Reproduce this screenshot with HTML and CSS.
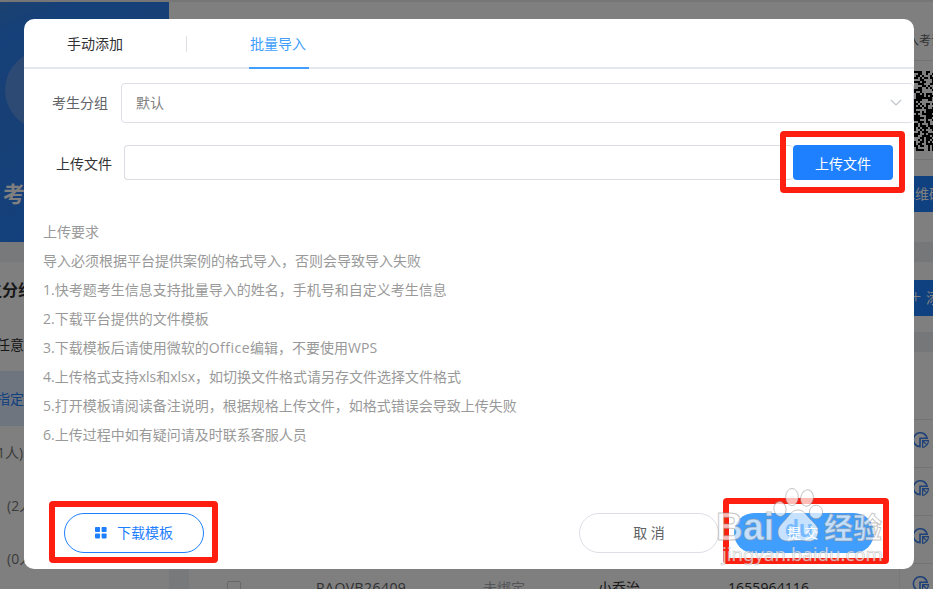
FILE: index.html
```
<!DOCTYPE html>
<html lang="zh-CN">
<head>
  <meta charset="UTF-8">
  <meta name="viewport" content="width=device-width, initial-scale=1.0">
  <title>批量导入</title>
  <link rel="stylesheet" href="styles.css">
</head>
<body>
  <svg class="symbols" width="0" height="0">
    <symbol id="pie" viewBox="0 0 18 18">
      <path d="M8 15.7A7 7 0 1 1 15.2 7.2H8Z" fill="none" stroke="currentColor" stroke-width="1.6"/>
      <path d="M10.6 9.6H16.4Q16.4 14 11.9 16.2H10.6Z M11 10l3.2 3.4" fill="none" stroke="currentColor" stroke-width="1.2"/>
    </symbol>
  </svg>

  <div class="page">
    <div class="left">
      <div class="banner">
        <div class="circle"></div>
        <h2>考试</h2>
      </div>
      <div class="groups">
        <div class="group-title">生分组</div>
        <div class="group">任意</div>
        <div class="group active">指定</div>
        <div class="group count first">1人)</div>
        <div class="group count">(2人)</div>
        <div class="group count">(0人)</div>
      </div>
    </div>
    <div class="main">
      <div class="table-row">
        <span class="checkbox"></span>
        <span class="code">RAQVB26409</span>
        <span class="unbound">未绑定</span>
        <span class="name">小乔治</span>
        <span class="phone">1655964116</span>
      </div>
    </div>
    <div class="right">
      <div class="entry">入考试</div>
      <div class="qr"><svg id="qr" width="80" height="80" shape-rendering="crispEdges"></svg></div>
      <div class="side-button qr-button">二维码</div>
      <div class="band"></div>
      <div class="add"><div class="side-button"><span class="plus">+</span>添加</div></div>
      <div class="band"></div>
      <div class="head"></div>
      <div class="op"><svg><use href="#pie"/></svg></div>
      <div class="op"><svg><use href="#pie"/></svg></div>
      <div class="op"><svg><use href="#pie"/></svg></div>
      <div class="op"><svg><use href="#pie"/></svg></div>
    </div>
  </div>

  <div class="mask">
    <div class="dialog">
      <div class="tabs">
        <div class="tab">手动添加</div>
        <span class="split"></span>
        <div class="tab active">批量导入</div>
      </div>
      <div class="form-row">
        <label>考生分组</label>
        <div class="select">
          <span>默认</span>
          <svg width="12" height="8" viewBox="0 0 12 8"><path d="M1 1l5 5 5-5" fill="none" stroke="#c0c4cc" stroke-width="1.2"/></svg>
        </div>
      </div>
      <div class="form-row upload">
        <label>上传文件</label>
        <div class="file-input"></div>
        <button class="upload-button">上传文件</button>
      </div>
      <div class="tips">
        <p>上传要求</p>
        <p>导入必须根据平台提供案例的格式导入，否则会导致导入失败</p>
        <p>1.快考题考生信息支持批量导入的姓名，手机号和自定义考生信息</p>
        <p>2.下载平台提供的文件模板</p>
        <p>3.下载模板后请使用微软的<span class="office">Office</span>编辑，不要使用WPS</p>
        <p>4.上传格式支持xls和xlsx，如切换文件格式请另存文件选择文件格式</p>
        <p>5.打开模板请阅读备注说明，根据规格上传文件，如格式错误会导致上传失败</p>
        <p>6.上传过程中如有疑问请及时联系客服人员</p>
      </div>
      <div class="footer">
        <button class="round download">
          <svg width="12" height="12" viewBox="0 0 12 12" fill="currentColor"><rect width="5" height="5" rx=".8"/><rect x="6.6" width="5" height="5" rx=".8"/><rect y="6.4" width="5" height="5" rx=".8"/><rect x="6.6" y="6.4" width="5" height="5" rx=".8"/></svg>
          下载模板
        </button>
        <button class="round cancel">取 消</button>
        <button class="round submit" aria-label="提交"></button>
      </div>
    </div>
  </div>

  <div class="frame frame-upload"></div>
  <div class="frame frame-download"></div>
  <div class="frame frame-submit"></div>

  <svg class="watermark" width="180" height="90" viewBox="0 0 180 90">
    <g class="mark">
      <ellipse cx="63" cy="29" rx="6" ry="7.5" transform="rotate(-12 63 29)"/>
      <ellipse cx="75" cy="17" rx="6.3" ry="8.6"/>
      <ellipse cx="90" cy="18" rx="6.3" ry="8.2" transform="rotate(12 90 18)"/>
      <ellipse cx="99" cy="32" rx="6.6" ry="6.8"/>
      <path d="M81 30c6 0 8 5 12 9 5 5 9 8 8 14-1 7-6 9-12 8-5-1-10-1-15 0-7 1-13-2-13-9 0-6 5-9 9-14 4-5 6-8 11-8Z"/>
      <text class="latin" x="-1" y="60" textLength="58" lengthAdjust="spacingAndGlyphs">Bai</text>
      <text class="cjk" x="107" y="59" textLength="58" lengthAdjust="spacingAndGlyphs">经验</text>
      <text class="url" x="5" y="81" textLength="161" lengthAdjust="spacingAndGlyphs">jingyan.baidu.com</text>
    </g>
    <text class="du" x="68" y="57" textLength="28" lengthAdjust="spacingAndGlyphs">du</text>
    <text class="submit-text" x="70" y="58">提 交</text>
  </svg>

  <script>
    // fill the QR block with 2px modules
    const qr = document.getElementById('qr');
    let seed = 77;
    let d = '';
    for (let y = 0; y < 80; y += 2) {
      for (let x = 0; x < 80; x += 2) {
        seed = (seed * 16807) % 2147483647;
        if (seed / 2147483647 < 0.52) {
          d += `M${x} ${y}h2v2h-2z`;
        }
      }
    }
    qr.innerHTML = `<path d="${d}"/>`;
  </script>
</body>
</html>
```
FILE: styles.css
```
* {
  box-sizing: border-box;
}
body {
  margin: 0;
  width: 933px;
  height: 589px;
  overflow: hidden;
  position: relative;
  font-family: "Open Sans", "Noto Sans CJK SC", sans-serif;
  font-size: 14px;
  color: #303133;
  background: #fff;
}
.symbols {
  position: absolute;
}
.page {
  display: flex;
  height: 589px;
  overflow: hidden;
  border-top: 2px solid #ececee;
}
.left {
  width: 169px;
  flex: none;
}
.banner {
  height: 240px;
  padding: 48px 0 0 5px;
  overflow: hidden;
  background: linear-gradient(155deg, #3a84e0 0%, #2a80f2 12%, #3080ec 35%, #2380ff 100%);
}
.banner .circle {
  width: 80px;
  height: 80px;
  border-radius: 50%;
  background: #5b94ea;
}
.banner h2 {
  margin: 48px 0 0 -2px;
  font-size: 22px;
  line-height: 30px;
  color: #fff;
}
.groups {
  height: 400px;
  border-top: 20px solid #eff2f6;
  white-space: nowrap;
}
.group-title {
  height: 54px;
  margin-left: -14px;
  font-size: 16px;
  font-weight: bold;
  line-height: 56px;
}
.group {
  height: 55px;
  line-height: 58px;
  text-indent: -4px;
}
.group.active {
  line-height: 56px;
  color: #1f80ff;
  background: #dfeaff;
}
.group.count {
  height: 53px;
  line-height: 53px;
  text-indent: 7px;
  color: #777;
}
.group.count.first {
  text-indent: -3px;
}
.main {
  display: flex;
  align-items: flex-end;
  flex: none;
  width: 730px;
  border-left: 20px solid #eff2f6;
  border-image: linear-gradient(#fff 240px, #eff2f6 240px) 1;
  border-width: 0 0 0 20px;
}
.table-row {
  display: flex;
  align-items: center;
  height: 24px;
  margin-bottom: -11px;
  padding-left: 38px;
  line-height: 24px;
}
.checkbox {
  width: 14px;
  height: 14px;
  margin-right: 75px;
  border: 1px solid #ccd0d8;
  border-radius: 2px;
}
.code {
  width: 167px;
  letter-spacing: .45px;
  color: #606266;
}
.unbound {
  width: 115px;
  color: #a9abb0;
}
.name {
  width: 130px;
}
.phone {
  letter-spacing: .1px;
}
.right {
  flex: 1;
  min-width: 0;
  white-space: nowrap;
}
.entry {
  height: 59px;
  padding: 21px 0 0 8px;
  font-size: 12px;
  line-height: 36px;
  color: #606266;
  border-bottom: 1px solid #e4e7ed;
}
.qr {
  height: 99px;
  padding: 10px 0 0 13px;
  border-bottom: 1px solid #e4e7ed;
}
.side-button {
  height: 36px;
  line-height: 36px;
  color: #fff;
  background: #1f80ff;
}
.qr-button {
  margin: 16px 0 30px;
  text-indent: 2px;
}
.band {
  height: 20px;
  background: #eceff3;
}
.add {
  height: 70px;
  padding-top: 18px;
}
.add .side-button {
  padding-left: 11px;
}
.plus {
  display: inline-block;
  width: 16px;
  font-size: 20px;
  font-weight: 300;
  line-height: 20px;
  vertical-align: -1px;
}
.head {
  height: 68px;
  border-bottom: 1px solid #e4e7ed;
}
.op {
  height: 48px;
  padding: 11px 0 0 12px;
  color: #3d83ee;
  border-bottom: 1px solid #e4e7ed;
  border-left: 1px solid #f0f0f0;
}
.op svg {
  display: block;
  width: 18px;
  height: 18px;
}
.mask {
  position: absolute;
  inset: 0;
  padding: 19px 19px 20px 24px;
  background: rgba(0, 0, 0, .5);
}
.dialog {
  display: flex;
  flex-direction: column;
  height: 550px;
  overflow: hidden;
  border-radius: 10px;
  background: #fff;
}
.tabs {
  display: flex;
  align-items: center;
  flex: none;
  height: 50px;
  padding-left: 43px;
  border-bottom: 2px solid #e4e7ed;
}
.tab {
  height: 50px;
  line-height: 50px;
  margin-bottom: -2px;
}
.split {
  width: 1px;
  height: 16px;
  margin: 2px 62px 0 63px;
  background: #dcdfe6;
}
.tab.active {
  width: 60px;
  padding-left: 1px;
  color: #409eff;
  border-bottom: 2px solid #409eff;
}
.form-row {
  display: flex;
  flex: none;
  align-items: center;
  height: 40px;
  margin-top: 14px;
  padding-left: 28px;
}
.form-row label {
  width: 69px;
  padding-bottom: 2px;
  color: #606266;
}
.select {
  display: flex;
  flex: 1;
  align-items: center;
  justify-content: space-between;
  height: 40px;
  padding: 0 11px 0 14px;
  color: #808080;
  border: 1px solid #dcdfe6;
  border-radius: 4px;
}
.select span {
  padding-bottom: 2px;
}
.form-row.upload {
  height: 35px;
  margin-top: 22px;
  padding-left: 32px;
}
.form-row.upload label {
  width: 68px;
  padding: 1px 0 0;
  color: #333;
}
.file-input {
  width: 669px;
  height: 35px;
  border: 1px solid #d9dce1;
  border-right: 0;
  border-radius: 4px;
}
button {
  padding: 0;
  border: 0;
  font-family: inherit;
  font-size: 14px;
}
.upload-button {
  width: 100px;
  height: 35px;
  color: #fff;
  background: #1f80ff;
  border-radius: 4px;
}
.tips {
  margin-top: 37px;
  padding-left: 19px;
  color: #999;
}
.tips p {
  height: 29px;
  margin: 0;
  line-height: 29px;
}
.office {
  letter-spacing: .5px;
}
.footer {
  display: flex;
  margin-top: auto;
  padding: 0 40px 16px;
}
.round {
  width: 140px;
  height: 40px;
  padding-bottom: 2px;
  border-radius: 20px;
  background: #fff;
}
.download {
  display: flex;
  align-items: center;
  justify-content: center;
  gap: 10px;
  color: #1f80ff;
  border: 1px solid #1f80ff;
}
.download svg {
  margin-top: 2px;
}
.cancel {
  margin-left: auto;
  margin-right: 15px;
  color: #606266;
  border: 1px solid #dcdfe6;
}
.submit {
  background: #409eff;
}
/* red highlight boxes */
.frame {
  position: absolute;
  border: 6px solid #ff1f10;
  border-radius: 4px;
}
.frame-upload {
  left: 780px;
  top: 131px;
  width: 125px;
  height: 62px;
}
.frame-download {
  left: 49px;
  top: 501px;
  width: 169px;
  height: 62px;
}
.frame-submit {
  left: 723px;
  top: 498px;
  width: 166px;
  height: 66px;
}
.watermark {
  position: absolute;
  left: 717px;
  top: 480px;
}
.mark {
  fill: rgba(255, 255, 255, .7);
  stroke: rgba(140, 140, 140, .5);
  stroke-width: 1;
}
.latin {
  font: bold 38px "Liberation Sans", sans-serif;
}
.cjk {
  font: bold 29px "Noto Sans CJK SC", sans-serif;
}
.url {
  font: 18px "Noto Sans", sans-serif;
  stroke-width: .6;
}
.du {
  font: bold 24px "Liberation Sans", sans-serif;
  fill: #409eff;
  opacity: .6;
}
.submit-text {
  font: 14px "Noto Sans CJK SC", sans-serif;
  fill: #fff;
}
```
